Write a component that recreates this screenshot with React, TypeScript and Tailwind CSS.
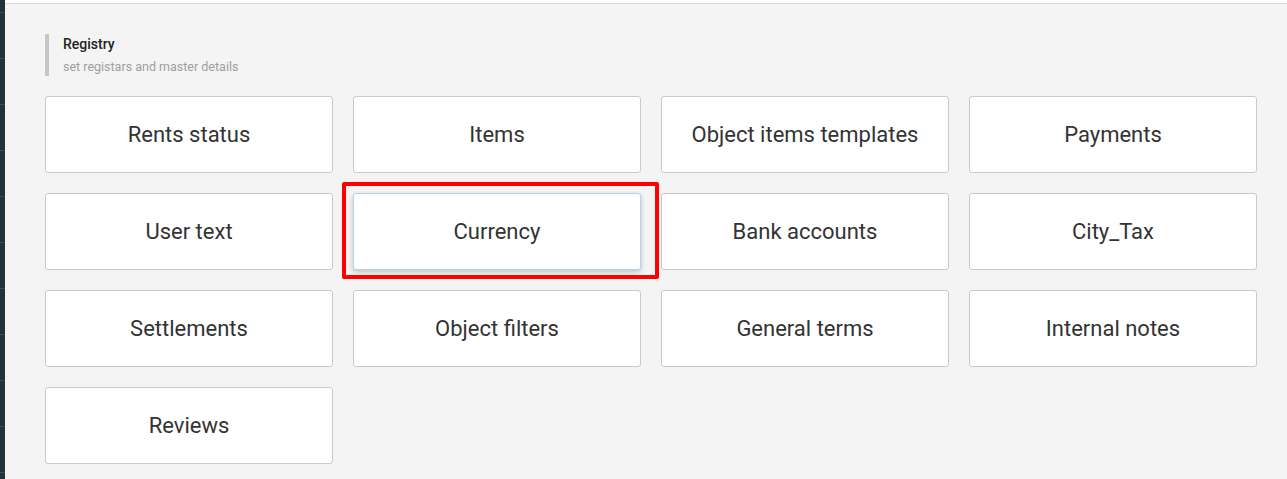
const items = [
  "Rents status",
  "Items",
  "Object items templates",
  "Payments",
  "User text",
  "Currency",
  "Bank accounts",
  "City_Tax",
  "Settlements",
  "Object filters",
  "General terms",
  "Internal notes",
  "Reviews",
];

export default function App() {
  return (
    <div
      className="flex min-h-[479px] bg-[#f4f4f4]"
      style={{ fontFamily: "Roboto, 'Liberation Sans', sans-serif" }}
    >
      {/* collapsed sidebar */}
      <div className="w-[5px] shrink-0 bg-[#253138] flex flex-col">
        <div className="h-[13px] border-b border-[#3d4c55]" />
        {Array.from({ length: 10 }).map((_, i) => (
          <div key={i} className="h-[46px] border-b border-[#3d4c55]" />
        ))}
      </div>

      <div className="flex-1 flex flex-col">
        <div className="h-[4px] bg-white border-b border-[#dcdcdc]" />

        <div className="pl-[40px] pr-[30px] pt-[30px]">
          {/* section header */}
          <div className="border-l-4 border-[#c6c6c6] pl-[14px] h-[42px] flex flex-col">
            <div className="text-[14px] leading-[20px] font-medium text-[#222]">Registry</div>
            <div className="text-[12.5px] leading-[20px] mt-[3px] text-[#9e9e9e]">set registars and master details</div>
          </div>

          <div className="grid grid-cols-4 gap-[20px] mt-[20px]">
            {items.map((name) => {
              const active = name === "Currency";
              return (
                <div key={name} className="relative">
                  <button
                    className={
                      active
                        ? "w-full h-[77px] bg-white rounded-[3px] border border-[#b3d4e6] shadow-[0_2px_5px_rgba(0,0,0,0.22)] text-[22px] text-[#333]"
                        : "w-full h-[77px] bg-white rounded-[3px] border border-[#cacaca] text-[22px] text-[#333]"
                    }
                  >
                    {name}
                  </button>
                  {active && (
                    <div className="absolute left-[-11px] top-[-11px] w-[317px] h-[97px] border-4 border-[#ff0000] rounded-[2px] pointer-events-none" />
                  )}
                </div>
              );
            })}
          </div>
        </div>
      </div>
    </div>
  );
}
